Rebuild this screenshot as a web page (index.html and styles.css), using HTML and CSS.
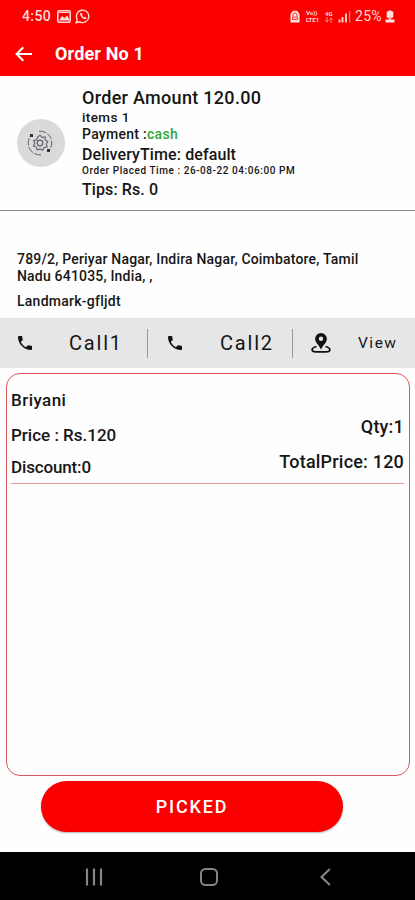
FILE: index.html
```html
<!DOCTYPE html>
<html lang="en">
<head>
<meta charset="utf-8">
<title>Order No 1</title>
<link rel="stylesheet" href="styles.css">
</head>
<body>
<header class="header">
  <div class="status">
    <div class="status-left">
      <span class="clock">4:50</span>
      <svg class="i-photo" width="14" height="13" viewBox="0 0 14 13"><rect x=".8" y=".8" width="12.4" height="11.4" rx="1.5" fill="none" stroke="#ffd9d5" stroke-width="1.6"/><path d="M2 10.5 5 6l2.500 2 3-2.500L12.500 10.500z" fill="#ffd9d5"/><path d="M2 2.500h10" stroke="#ffd9d5"/></svg>
      <svg class="i-chat" width="16" height="15" viewBox="0 0 16 15"><path d="M1.200 13.800 2.300 10.500A6.200 6.200 0 1 1 4.700 12.800z" fill="none" stroke="#ffd9d5" stroke-width="1.400"/><path d="M5.500 4c-1.500 2 2 6.500 5 6.200l1-1.500-1.700-1-1 .7-1.800-2 .6-.8-.8-1.700z" fill="#ffd9d5"/></svg>
    </div>
    <div class="status-right">
      <svg width="10" height="13" viewBox="0 0 10 13"><path d="M.5 4 3 .7h4L9.500 4v8.500h-9z" fill="#ffe4e0"/><path d="M3 6.500V5a2 2 0 0 1 4 0v1.500M2.500 7h5v2.500h-5z" fill="none" stroke="#f33" stroke-width="1"/></svg>
      <div class="tiny volte"><div>Vo))</div><div>LTE1</div></div>
      <div class="tiny net"><div>4G</div><svg width="8" height="6" viewBox="0 0 8 6"><path d="M2 0v5M.5 3.500 2 5l1.500-1.500M6 6V1M4.500 2.500 6 1l1.500 1.500" fill="none" stroke="#ff8b84"/></svg></div>
      <svg class="i-signal" width="13" height="13" viewBox="0 0 13 13"><path d="M1.500 12.500v-3M4.500 12.500V7M8 12.500V3.500" stroke="#ffc4bd" stroke-width="2"/><path d="M11.700 12.500V1" stroke="#ff8b84" stroke-width="1"/></svg>
      <span class="battery">25%</span>
      <svg class="i-battery" width="10" height="13" viewBox="0 0 10 13"><path d="M3.500.5h3v1h1.800v6H1.700v-6h1.800zM.5 9.500h9v3h-9z" fill="#ffe4e0"/><path d="M5 3v6.500M3 7l2 2.500L7 7" stroke="#fcc" fill="none"/></svg>
    </div>
  </div>
  <div class="titlebar">
    <svg width="18" height="16" viewBox="0 0 18 16"><path d="M17 8H2M8.300 1.300 1.600 8l6.700 6.700" fill="none" stroke="#fff" stroke-width="2"/></svg>
    <h1>Order No 1</h1>
  </div>
</header>

<section class="summary">
  <div class="avatar">
    <svg width="26" height="26" viewBox="0 0 26 26" fill="none" stroke="#5b6067"><path d="M13 5.200 15 7.500l3-.6.2 3 2.600 1.500-1.500 2.600.8 3-3 .5-1.500 2.700-2.600-1.300-2.800 1-.9-2.800-2.800-1.100 1.200-2.700-1-2.800 2.900-.8 1-2.600z" stroke-width="1.100"/><circle cx="13" cy="13" r="2.800" stroke-width="1.200"/><path d="M12 1.200A11.800 11.800 0 0 1 22.500 20M14 24.800A11.800 11.800 0 0 1 3.500 6" stroke-width="1" stroke-dasharray="7 1.500"/><path d="M3 4h3v3H3zM20 19h3v3h-3z" fill="#333" stroke="none"/></svg>
  </div>
  <div class="details">
    <div class="amount">Order Amount 120.00</div>
    <div class="items">items 1</div>
    <div class="payment">Payment :<span>cash</span></div>
    <div class="delivery">DeliveryTime: default</div>
    <div class="placed">Order Placed Time : 26-08-22 04:06:00 PM</div>
    <div class="tips">Tips: Rs. 0</div>
  </div>
</section>

<section class="address">
  <p class="street">789/2, Periyar Nagar, Indira Nagar, Coimbatore, Tamil<br>Nadu 641035, India, ,</p>
  <p class="landmark">Landmark-gfljdt</p>
</section>

<nav class="actions">
  <a class="action call-one">
    <svg width="14" height="14" viewBox="3 3 18 18"><path d="M6.620 10.790c1.440 2.830 3.760 5.140 6.590 6.590l2.200-2.200c.27-.27.67-.36 1.020-.24 1.120.37 2.330.57 3.570.57.55 0 1 .45 1 1V20c0 .55-.45 1-1 1C10.610 21 3 13.390 3 4c0-.55.45-1 1-1h3.500c.55 0 1 .45 1 1 0 1.250.2 2.450.57 3.570.11.35.03.74-.25 1.020z" fill="#111"/></svg>
    <span>Call1</span>
  </a>
  <a class="action call-two">
    <svg width="14" height="14" viewBox="3 3 18 18"><path d="M6.620 10.790c1.440 2.830 3.760 5.140 6.590 6.590l2.200-2.200c.27-.27.67-.36 1.020-.24 1.120.37 2.330.57 3.570.57.55 0 1 .45 1 1V20c0 .55-.45 1-1 1C10.610 21 3 13.390 3 4c0-.55.45-1 1-1h3.500c.55 0 1 .45 1 1 0 1.250.2 2.450.57 3.570.11.35.03.74-.25 1.020z" fill="#111"/></svg>
    <span>Call2</span>
  </a>
  <a class="action view">
    <svg width="20" height="20" viewBox="0 0 20 20"><path d="M5.500 13.500C-.5 15 0 18.800 5 18.800h10c5 0 5.500-3.800-.5-5.300" fill="none" stroke="#111" stroke-width="1.800"/><path fill-rule="evenodd" d="M10 0a5.900 5.900 0 0 1 5.900 5.900c0 3.500-4 6-5.900 10.500C8.100 11.900 4.100 9.400 4.100 5.900A5.900 5.900 0 0 1 10 0zm0 3.600a2.200 2.200 0 1 0 0 4.400 2.200 2.200 0 0 0 0-4.400z" fill="#111"/></svg>
    <span>View</span>
  </a>
</nav>

<main class="order">
  <div class="item">
    <div class="item-left">
      <div class="name">Briyani</div>
      <div class="price">Price : Rs.120</div>
      <div class="discount">Discount:0</div>
    </div>
    <div class="item-right">
      <div class="qty">Qty:1</div>
      <div class="total">TotalPrice: 120</div>
    </div>
  </div>
</main>

<button class="picked">PICKED</button>

<footer class="sysnav">
  <svg width="18" height="18" viewBox="0 0 18 18"><path d="M2 .5v17M9 .5v17M16 .5v17" stroke="#858585" stroke-width="2.200"/></svg>
  <svg class="home" width="18" height="18" viewBox="0 0 18 18"><rect x="1" y="1" width="16" height="16" rx="4.500" fill="none" stroke="#858585" stroke-width="2"/></svg>
  <svg width="11" height="18" viewBox="0 0 11 18"><path d="M9.800 1 1.500 9l8.300 8" fill="none" stroke="#858585" stroke-width="2.200"/></svg>
</footer>
</body>
</html>
```
FILE: styles.css
```css
* { box-sizing: border-box; margin: 0; padding: 0; }

body {
  width: 415px;
  height: 900px;
  display: flex;
  flex-direction: column;
  overflow: hidden;
  background: #fefefe;
  color: #161616;
  font-family: Roboto, sans-serif;
  font-weight: 500;
  white-space: nowrap;
}

svg { display: block; flex: none; }

.header { height: 76px; background: #fb0000; color: #fff; }

.status {
  height: 32px;
  padding: 0 20px 0 22px;
  display: flex;
  justify-content: space-between;
  align-items: center;
  color: #ffd9d5;
}
.status-left, .status-right { display: flex; align-items: center; }
.clock { width: 35px; font-size: 14px; letter-spacing: .4px; }
.i-chat { margin-left: 4px; }
.tiny { font-size: 6px; line-height: 7px; font-weight: 700; }
.volte { width: 16px; margin-left: 6px; }
.net { width: 10px; margin-left: 3px; }
.i-signal { margin-left: 3px; }
.battery { width: 29px; margin-left: 4px; font-size: 14px; font-weight: 400; letter-spacing: .3px; }
.i-battery { margin-left: 1px; }

.titlebar { height: 44px; padding-left: 15px; display: flex; align-items: center; }
.titlebar h1 { margin-left: 22px; font-size: 18px; line-height: 44px; font-weight: 700; letter-spacing: .15px; }

.summary {
  height: 135px;
  padding: 11px 0 0 17px;
  display: flex;
  border-bottom: 1.500px solid #8b8b8b;
}
.avatar {
  width: 48px;
  height: 48px;
  margin: 32px 17px 0 0;
  border-radius: 50%;
  background: #dadada;
  display: grid;
  place-items: center;
}
.avatar svg { margin-right: 2px; }
.amount { font-size: 18px; line-height: 22px; letter-spacing: .3px; }
.items { font-size: 13.500px; line-height: 17px; letter-spacing: .4px; }
.payment { font-size: 14px; line-height: 17px; letter-spacing: .28px; }
.payment span { color: #2fa83c; }
.delivery { font-size: 16px; line-height: 23px; letter-spacing: .1px; }
.placed { font-size: 10px; line-height: 9px; letter-spacing: .56px; }
.tips { font-size: 16px; line-height: 29px; letter-spacing: .1px; }

.address { height: 107px; padding: 40px 17px 0; font-size: 14px; line-height: 17px; letter-spacing: .19px; }
.landmark { margin-top: 8px; letter-spacing: .25px; }

.actions { height: 50px; background: #e6e6e6; display: flex; align-items: center; }
.action { display: flex; align-items: center; height: 29px; }
.call-one, .call-two { font-size: 20px; letter-spacing: 1.800px; font-weight: 400; border-right: 1.500px solid #999; }
.call-one { width: 148px; padding-left: 18px; }
.call-two { width: 145px; padding-left: 20px; }
.call-one span { margin-left: 37px; }
.call-two span { margin-left: 38px; }
.view { padding-left: 18px; font-size: 15.500px; letter-spacing: 1.500px; font-weight: 400; }
.view span { margin-left: 27px; }

.order {
  height: 403px;
  margin: 5px 5px 0 6px;
  padding: 0 5px 0 4px;
  border: 1px solid #d9575b;
  border-radius: 14px;
}
.item {
  height: 110px;
  display: flex;
  justify-content: space-between;
  border-bottom: 1px solid #e29a9a;
  font-size: 17px;
}
.name { margin-top: 9px; line-height: 35px; letter-spacing: .45px; }
.price { line-height: 34px; }
.discount { line-height: 31px; letter-spacing: -.15px; }
.item-right { text-align: right; padding-top: 35px; font-size: 18px; letter-spacing: .2px; }
.qty, .total { line-height: 35px; }

.picked {
  width: 302px;
  height: 51px;
  margin: 5px 0 0 41px;
  border: 0;
  border-radius: 26px;
  background: #fb0000;
  box-shadow: 0 1px 2px rgba(0, 0, 0, .3);
  color: #fff;
  font: 500 18px Roboto, sans-serif;
  letter-spacing: 1.800px;
}

.sysnav {
  height: 48px;
  margin-top: auto;
  padding: 2px 84px 0 85px;
  display: flex;
  justify-content: space-between;
  align-items: center;
  background: #000;
}
.home { margin-right: 5px; }
```
